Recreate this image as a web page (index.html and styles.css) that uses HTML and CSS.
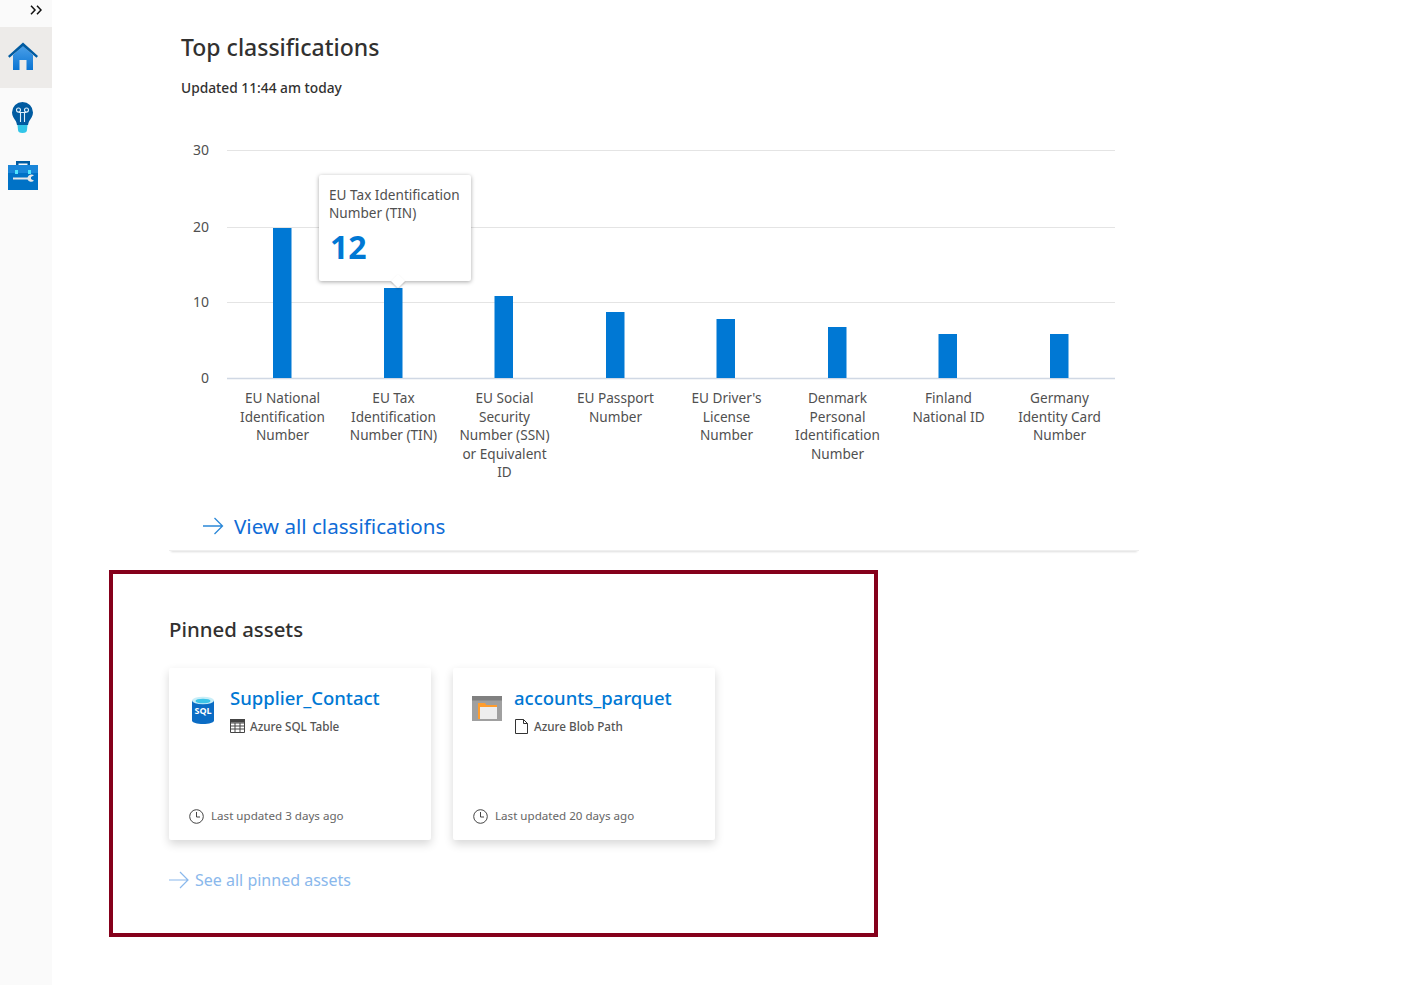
FILE: index.html

```html
<!DOCTYPE html>
<html lang="en">
<head>
    <meta charset="UTF-8">
    <title>Data catalog home</title>
    <link rel="stylesheet" href="styles.css">
</head>
<body>

<div class="app">

    <div class="rail">
        <div class="rail-toggle">
            <svg width="12" height="10" viewBox="0 0 12 10"><path d="M1 .8 5 5 1 9.2M7 .8 11 5 7 9.2" fill="none" stroke="#111" stroke-width="1.5"/></svg>
        </div>
        <div class="rail-item rail-item-active">
            <svg class="rail-icon-up" width="30" height="30" viewBox="0 0 30 30">
                <defs>
                    <linearGradient id="homeFill" x1="0" y1="0" x2="0" y2="1">
                        <stop offset="0" stop-color="#4a9fe8"/>
                        <stop offset="1" stop-color="#0a74d2"/>
                    </linearGradient>
                </defs>
                <path d="M5 14 15 5l10 9v15H18.500v-10h-7v10H5z" fill="url(#homeFill)"/>
                <path d="M0 15 15 1.500 30 15l-1.500 1.800L15 5.200 1.500 16.800z" fill="#005ba1"/>
            </svg>
        </div>
        <div class="rail-item rail-item-bulb">
            <svg width="21" height="31" viewBox="0 0 21 31">
                <path d="M10.500 0A10.500 10.500 0 0 0 0 10.500c0 3.800 2.300 6 3.700 8.500.8 1.400 1 2.800 1.300 4h11c.3-1.200.5-2.600 1.300-4 1.400-2.500 3.700-4.700 3.700-8.500A10.500 10.500 0 0 0 10.500 0z" fill="#005ba1"/>
                <path d="M5.500 23h10l-.5 5a4.500 3 0 0 1-9 0z" fill="#32c5e8"/>
                <circle cx="6.500" cy="8" r="2" fill="none" stroke="#dff0fb" stroke-width="1.100"/>
                <circle cx="14.500" cy="8" r="2" fill="none" stroke="#dff0fb" stroke-width="1.100"/>
                <path d="M8.500 10v10M12.500 10v10M6.500 10.500h8" fill="none" stroke="#dff0fb" stroke-width="1.100"/>
            </svg>
        </div>
        <div class="rail-item">
            <svg class="rail-icon-up" width="30" height="30" viewBox="0 0 30 30">
                <path d="M8 6V1h14v5h-2.500V3.500h-9V6z" fill="#005ba1"/>
                <rect y="5" width="30" height="25" fill="#0072c6"/>
                <rect y="5" width="30" height="8" fill="#1a86d9"/>
                <rect x="7" y="10" width="3" height="4" fill="#50e6ff"/>
                <rect x="20" y="10" width="3" height="4" fill="#50e6ff"/>
                <path d="M5 17.500h14.500a4.200 4.200 0 0 1 6.500-2.200l-3 1.700v2l3 1.700a4.200 4.200 0 0 1-6.500-1.200H5z" fill="#e8e8e8"/>
            </svg>
        </div>
    </div>

    <div class="main">

        <div class="panel">
            <h1 class="panel-title">Top classifications</h1>
            <p class="panel-updated">Updated 11:44 am today</p>

            <div class="chart">
                <svg class="chart-plot" width="946" height="240" viewBox="0 0 946 240">
                    <g class="chart-ticks">
                        <text x="28" y="6">30</text>
                        <text x="28" y="83">20</text>
                        <text x="28" y="158">10</text>
                        <text x="28" y="234">0</text>
                    </g>
                    <g class="chart-grid">
                        <line x1="46" x2="934" y1="5.500" y2="5.500"/>
                        <line x1="46" x2="934" y1="82.500" y2="82.500"/>
                        <line x1="46" x2="934" y1="157.500" y2="157.500"/>
                    </g>
                    <line class="chart-axis" x1="46" x2="934" y1="233.500" y2="233.500"/>
                    <g class="chart-bars">
                        <rect x="92" y="83" width="18.500" height="150"/>
                        <rect x="203" y="143" width="18.500" height="90"/>
                        <rect x="313.500" y="151" width="18.500" height="82"/>
                        <rect x="425" y="167" width="18.500" height="66"/>
                        <rect x="535.500" y="174" width="18.500" height="59"/>
                        <rect x="647" y="182" width="18.500" height="51"/>
                        <rect x="757.500" y="189" width="18.500" height="44"/>
                        <rect x="869" y="189" width="18.500" height="44"/>
                    </g>
                </svg>

                <div class="chart-tip">
                    <div class="chart-tip-label">EU Tax Identification Number (TIN)</div>
                    <div class="chart-tip-value">12</div>
                </div>

                <div class="chart-labels">
                    <div>EU National Identification Number</div>
                    <div>EU Tax Identification Number (TIN)</div>
                    <div>EU Social Security Number (SSN) or Equivalent ID</div>
                    <div>EU Passport Number</div>
                    <div>EU Driver's License Number</div>
                    <div>Denmark Personal Identification Number</div>
                    <div>Finland National ID</div>
                    <div>Germany Identity Card Number</div>
                </div>
            </div>

            <a class="view-all" href="#">
                <svg width="21" height="18" viewBox="0 0 21 18"><path d="M0 9h19.500M11.500 1l8 8-8 8" fill="none" stroke="#2b88d8" stroke-width="1.300"/></svg>
                View all classifications
            </a>
        </div>

        <div class="pinned">
            <h2 class="pinned-title">Pinned assets</h2>

            <div class="pinned-cards">
                <div class="card">
                    <div class="card-head">
                        <svg class="card-icon" width="24" height="29" viewBox="0 0 24 29">
                            <path d="M1 4.500v20c0 2 5 3.500 11 3.500s11-1.500 11-3.500v-20z" fill="#0b6cc4"/>
                            <ellipse cx="12" cy="4.500" rx="11" ry="3.800" fill="#c8eef8"/>
                            <ellipse cx="12" cy="5" rx="7.500" ry="2.300" fill="#3cc5e8"/>
                            <text class="card-sql" x="12" y="18">SQL</text>
                        </svg>
                        <div>
                            <a class="card-name" href="#">Supplier_Contact</a>
                            <div class="card-type">
                                <svg width="15" height="14" viewBox="0 0 15 14"><path d="M.5.500h14v13H.500zM.5 4h14M.5 7h14M.5 10h14M5 4v9.500M10 4v9.500" fill="none" stroke="#444" stroke-width="1"/><rect width="15" height="3.500" fill="#444"/></svg>
                                Azure SQL Table
                            </div>
                        </div>
                    </div>
                    <div class="card-foot">
                        <svg width="15" height="15" viewBox="0 0 15 15"><circle cx="7.500" cy="7.500" r="6.800" fill="none" stroke="#444"/><path d="M7.500 3v5h3.500" fill="none" stroke="#444"/></svg>
                        Last updated 3 days ago
                    </div>
                </div>

                <div class="card">
                    <div class="card-head">
                        <svg class="card-icon-wide" width="30" height="26" viewBox="0 0 30 26">
                            <rect width="30" height="25" fill="#a0a0a0"/>
                            <rect width="30" height="4.500" fill="#808080"/>
                            <path d="M6 7h7l1.500 2H25v14H6z" fill="#ff9d2e"/>
                            <rect x="8" y="11" width="17" height="12" fill="#eeeeee"/>
                        </svg>
                        <div>
                            <a class="card-name" href="#">accounts_parquet</a>
                            <div class="card-type card-type-blob">
                                <svg width="13" height="15" viewBox="0 0 13 15"><path d="M.5.500h8l4 4v10H.500zM8.500.500v4h4" fill="none" stroke="#333"/></svg>
                                Azure Blob Path
                            </div>
                        </div>
                    </div>
                    <div class="card-foot">
                        <svg width="15" height="15" viewBox="0 0 15 15"><circle cx="7.500" cy="7.500" r="6.800" fill="none" stroke="#444"/><path d="M7.500 3v5h3.500" fill="none" stroke="#444"/></svg>
                        Last updated 20 days ago
                    </div>
                </div>
            </div>

            <a class="see-all" href="#">
                <svg width="20" height="18" viewBox="0 0 20 18"><path d="M0 9h19M11 1l8 8-8 8" fill="none" stroke="#8ab8ec" stroke-width="1.200"/></svg>
                See all pinned assets
            </a>
        </div>

    </div> <!-- end main -->

</div> <!-- end app -->

</body>
</html>
```

FILE: styles.css

```css
body {
    margin: 0;
    background-color: white;
    color: #323130;
    font-family: "Noto Sans", "Open Sans", sans-serif;
}

a {
    text-decoration: none;
}

.app {
    display: flex;
    align-items: flex-start;
}

/* left rail */

.rail {
    width: 52px;
    height: 985px;
    flex-shrink: 0;
    background-color: #fafafa;
}

.rail-toggle {
    height: 27px;
    padding: 5px 10px 0 30px;
    box-sizing: border-box;
}

.rail-toggle svg {
    display: block;
}

.rail-item {
    height: 59px;
    display: flex;
    align-items: center;
    padding-left: 8px;
}

.rail-item-active {
    height: 61px;
    background-color: #edebe9;
}

.rail-item-bulb {
    padding-left: 12px;
}

.rail-icon-up {
    margin-top: -3px;
}

/* top classifications */

.main {
    padding-left: 57px;
}

.panel {
    width: 970px;
    margin-left: 60px;
    padding: 31px 0 0 0;
    box-sizing: border-box;
    height: 551px;
    border-bottom: 1px solid #efefef;
    box-shadow: 0 3px 2px -2px #dedede;
}

.panel-title {
    margin: 0 0 0 12px;
    font-size: 23px;
    line-height: 32px;
    font-weight: 500;
}

.panel-updated {
    margin: 15px 0 0 12px;
    font-size: 13.750px;
    line-height: 20px;
    font-weight: 500;
}

.chart {
    position: relative;
    margin-top: 47px;
    margin-left: 12px;
}

.chart-plot {
    display: block;
    overflow: visible;
}

.chart-ticks text {
    font-size: 14px;
    fill: #505050;
    text-anchor: end;
    dominant-baseline: middle;
}

.chart-grid line {
    stroke: #e4e4e4;
}

.chart-axis {
    stroke: #d0d8e4;
    stroke-width: 1.500;
}

.chart-bars rect {
    fill: #0078d4;
}

.chart-labels {
    display: grid;
    grid-template-columns: repeat(8, 111px);
    margin: 4px 0 0 46px;
    font-size: 13.600px;
    line-height: 18.500px;
    color: #505050;
    text-align: center;
}

.chart-labels div {
    padding: 0 9px;
}

.chart-tip {
    position: absolute;
    left: 138px;
    top: 30px;
    width: 152px;
    height: 106px;
    box-sizing: border-box;
    padding: 11px 3px 11px 10px;
    background-color: white;
    border-radius: 2px;
    box-shadow: 0 1px 4px rgba(0, 0, 0, 0.35);
    font-size: 13.600px;
    line-height: 18px;
    color: #505050;
}

.chart-tip::after {
    content: "";
    position: absolute;
    left: 74px;
    bottom: -5px;
    width: 10px;
    height: 10px;
    background-color: white;
    box-shadow: 1px 1px 2px rgba(0, 0, 0, 0.2);
    transform: rotate(45deg);
}

.chart-tip-value {
    margin-top: 5px;
    margin-left: 1px;
    font-size: 32px;
    line-height: 40px;
    font-weight: 700;
    color: #0078d4;
}

.view-all {
    display: flex;
    align-items: center;
    gap: 10px;
    margin: 30px 0 0 34px;
    font-size: 20.600px;
    line-height: 28px;
    color: #0f6cd6;
}

/* pinned assets, with the red highlight round it */

.pinned {
    width: 769px;
    height: 367px;
    margin-top: 19px;
    box-sizing: border-box;
    border: 4px solid #85001b;
    padding: 42px 56px 0 56px;
}

.pinned-title {
    margin: 0;
    font-size: 20.400px;
    line-height: 27px;
    font-weight: 500;
}

.pinned-cards {
    display: flex;
    gap: 22px;
    margin-top: 25px;
}

.card {
    width: 262px;
    height: 172px;
    box-sizing: border-box;
    padding: 17px 20px 16px 20px;
    display: flex;
    flex-direction: column;
    justify-content: space-between;
    background-color: white;
    border-radius: 2px;
    box-shadow: 0 4px 10px rgba(0, 0, 0, 0.16);
}

.card-head {
    display: flex;
    gap: 15px;
}

.card-icon {
    margin: 11px 0 0 2px;
}

.card-icon-wide {
    margin-top: 11px;
    margin-left: -1px;
    margin-right: -3px;
}

.card-sql {
    font-size: 9px;
    font-weight: 700;
    fill: white;
    text-anchor: middle;
}

.card-name {
    font-size: 18.500px;
    line-height: 26px;
    font-weight: 500;
    color: #0078d4;
}

.card-type {
    display: flex;
    align-items: center;
    gap: 5px;
    margin-top: 7px;
    font-size: 11.700px;
    line-height: 16px;
    font-weight: 500;
    color: #555;
}

.card-type-blob {
    gap: 6px;
    padding-left: 1px;
}

.card-foot {
    display: flex;
    align-items: center;
    gap: 7px;
    font-size: 11.600px;
    line-height: 16px;
    color: #666;
}

.see-all {
    display: flex;
    align-items: center;
    gap: 6px;
    margin-top: 28px;
    font-size: 16px;
    line-height: 24px;
    color: #8ab8ec;
}
```
